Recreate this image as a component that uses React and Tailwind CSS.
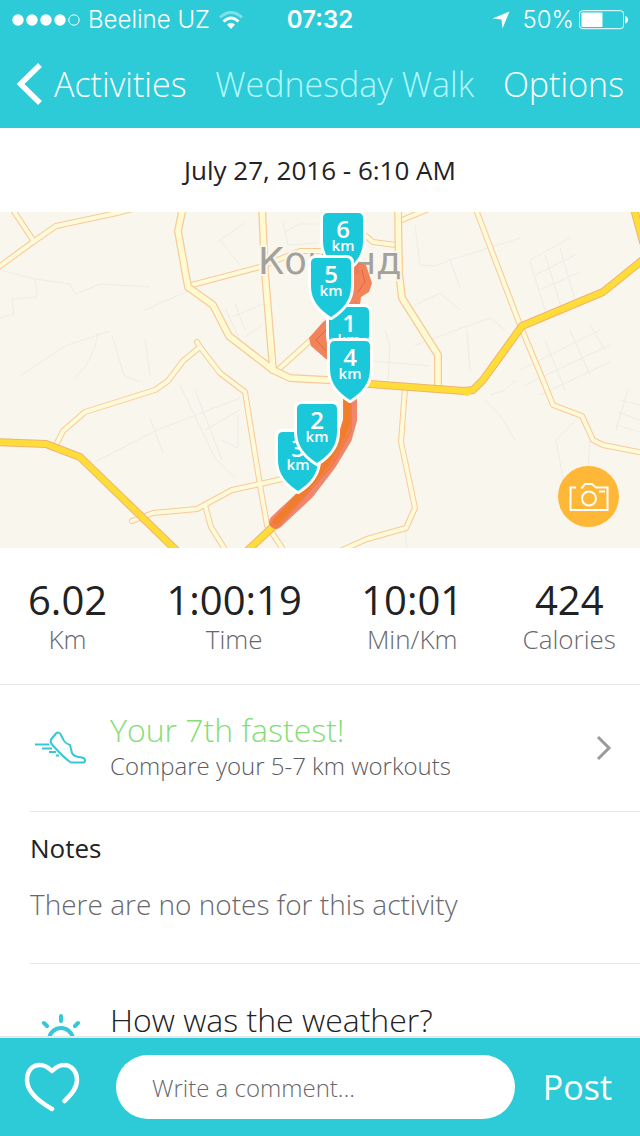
import { useState } from "react";

const stats = [
  { value: "6.02", label: "Km" },
  { value: "1:00:19", label: "Time" },
  { value: "10:01", label: "Min/Km" },
  { value: "424", label: "Calories" },
];

// faint lanes between the roads
const lanes = [
  "M0 270L35 279L37 297L12 299L14 314L0 318M35 279L70 284L75 294L100 284L150 287",
  "M145 310L188 291M20 376L65 346L110 331M98 333Q95 358 75 378M112 335L124 375L140 382M145 339L150 375",
  "M217 242L245 223M220 240L240 265M232 317L265 303M235 304L245 330M225 308L240 340M244 338L262 325",
  "M95 462L155 431L240 398M150 418L163 453M180 385L215 458L235 478M195 390L222 460M205 430L240 410M222 440L238 448L238 415",
  "M285 232L300 224L318 224M283 222L288 245L318 243M415 225L420 265L435 266L450 260L520 238M450 260L460 288M415 305L440 293L460 310",
  "M530 260L570 238M535 275L575 255M540 290L580 272M530 262L548 320M545 255L562 310M560 248L575 300",
  "M520 370L600 330M525 385L610 345M540 395L610 362M545 340L565 390M570 330L590 375M590 325L605 350",
  "M485 400L500 415L515 440M490 395L505 390L515 380M578 418L556 440L565 490M590 440L588 470M620 400L640 405M618 412L640 420M616 425L640 432M628 390L616 430",
  "M385 330L390 345L388 380M415 345L490 318L505 330M467 330L470 370M360 360L430 366M405 530L407 548",
];

const roads = [
  "M-4 269L33 242L56 226L117 213L140 207",
  "M11 207L33 240",
  "M188 286L260 267L300 251L344 251",
  "M344 232L366 236L373 242L396 245",
  "M402 220L436 206",
  "M475 207L520 325L543 380L553 405L582 416L593 440L603 445L644 453",
  "M280 368L312 339",
  "M197 342L200 347L183 361L168 381L155 390L85 412L63 431L57 443",
  "M200 347L220 373L245 392L260 485L267 525L284 551",
  "M132 521L153 513L197 509L232 490L260 484L300 475",
  "M205 505L211 527L226 551",
  "M405 388L401 442L415 508L406 528L367 539L340 551",
];

const wideRoads = [
  "M183 207L178 231L188 287L213 305L229 336L273 370L290 378L345 381",
  "M262 207L265 273L273 370",
  "M398 207L399 273L402 298L438 355L438 386",
];

const highways = [
  "M-4 442L46 444L80 457L178 552",
  "M345 382L370 384L464 391L473 390L483 380L522 326L603 292L644 259",
  "M633 205L643 242",
  "M246 552L277 523L330 463L348 430L348 385",
];

// later pins are drawn over the earlier ones
const pins = [
  { km: 6, x: 323, y: 213 },
  { km: 1, x: 329, y: 307 },
  { km: 5, x: 311, y: 258 },
  { km: 4, x: 330, y: 341 },
  { km: 3, x: 278, y: 432 },
  { km: 2, x: 297, y: 404 },
];

function Road({ paths, edge, edgeWidth, fill, fillWidth }) {
  return (
    <g fill="none" strokeLinejoin="round" strokeLinecap="round">
      {paths.map((d) => (
        <path key={d} d={d} stroke={edge} strokeWidth={edgeWidth} />
      ))}
      {paths.map((d) => (
        <path key={d + "fill"} d={d} stroke={fill} strokeWidth={fillWidth} />
      ))}
    </g>
  );
}

function RouteMap() {
  return (
    <svg
      viewBox="0 212 640 336"
      preserveAspectRatio="xMidYMid slice"
      className="block h-[336px] w-full bg-[#f9f6ee]"
      role="img"
      aria-label="Route map"
    >
      <g fill="none" stroke="#efece6" strokeWidth="1">
        {lanes.map((d) => (
          <path key={d} d={d} />
        ))}
      </g>
      <Road paths={roads} edge="#f8ca98" edgeWidth="6" fill="#fffada" fillWidth="4" />
      <Road paths={wideRoads} edge="#f8ca98" edgeWidth="8" fill="#fffad2" fillWidth="5.500" />
      <Road paths={highways} edge="#f0b272" edgeWidth="8" fill="#fedd38" fillWidth="6" />
      <circle cx="467" cy="392" r="4" fill="#fedd38" />

      <text
        x="258"
        y="274"
        fill="#a3a19b"
        stroke="#f9f6ee"
        strokeWidth="4"
        paintOrder="stroke"
        className="font-['DejaVu_Sans',sans-serif] text-[37px]"
      >
        Коканд
      </text>

      {/* recorded route */}
      <g fill="#f07a4e" fillOpacity="0.92">
        <path d="M356 262L366 265L369 274L372 283L369 292L361 297L360 304L344 304L344 262Z" />
        <path d="M334 314L323 322L309 338L311 346L326 359L340 362Z" />
      </g>
      <path d="M362 270L365 282L358 292M326 330L316 340L326 351" fill="none" stroke="#e86539" strokeWidth="1" />
      <path
        d="M276 522L292 507L307 493L330 463L345 438L350 420L350 392"
        fill="none"
        stroke="#ee6a4a"
        strokeOpacity="0.8"
        strokeWidth="14"
        strokeLinecap="round"
        strokeLinejoin="round"
      />
      <path
        d="M276 521L303 492L326 463L342 435L347 420L347 392"
        fill="none"
        stroke="#f07c22"
        strokeOpacity="0.75"
        strokeWidth="7"
        strokeLinecap="round"
        strokeLinejoin="round"
      />

      {pins.map((pin) => (
        <g key={pin.km} transform={`translate(${pin.x} ${pin.y})`}>
          <path
            d="M5 0H35Q40 0 40 5V28C40 43 31 52 20 59C9 52 0 43 0 28V5Q0 0 5 0Z"
            fill="#1bc8da"
            stroke="#fff"
            strokeWidth="6"
            paintOrder="stroke"
            strokeLinejoin="round"
          />
          <g
            fill="#fff"
            textAnchor="middle"
            className="font-['Open_Sans',sans-serif] font-semibold"
          >
            <text x="20" y="25" className="text-[24px]">{pin.km}</text>
            <text x="20" y="38" className="text-[15px]">km</text>
          </g>
        </g>
      ))}
    </svg>
  );
}

function StatusBar() {
  return (
    <div className="grid h-10 grid-cols-[1fr_auto_1fr] items-center px-3 font-['Inter',sans-serif] text-[24px]">
      <div className="flex items-center gap-2">
        <svg width="68" height="12" viewBox="0 0 68 12" fill="#fff">
          <circle cx="6" cy="6" r="5.700" />
          <circle cx="20" cy="6" r="5.700" />
          <circle cx="34" cy="6" r="5.700" />
          <circle cx="48" cy="6" r="5.700" />
          <circle cx="62" cy="6" r="5.200" fill="none" stroke="#fff" />
        </svg>
        <span className="font-light">Beeline UZ</span>
        <svg width="26" height="20" viewBox="0 0 26 20" fill="none" stroke="#fff" strokeWidth="3">
          <path d="M2 7.500Q13 -2.500 24 7.500" opacity="0.4" />
          <path d="M5.500 11.500Q13 4.500 20.500 11.500" />
          <path d="M9 14.500Q13 11 17 14.500L13 19Z" fill="#fff" stroke="none" />
        </svg>
      </div>
      <span className="font-semibold">07:32</span>
      <div className="flex items-center justify-end">
        <svg width="18" height="18" viewBox="0 0 18 18" fill="#fff" className="mr-3">
          <path d="M17.500 0.500L10.500 17.500L9.500 8.500L0.500 7.500Z" />
        </svg>
        <span className="mr-1 font-light">50%</span>
        <svg width="50" height="20" viewBox="0 0 50 20">
          <rect x="1.500" y="0.700" width="44" height="18" rx="3" fill="none" stroke="#fff" />
          <rect x="3.500" y="2.500" width="21" height="14.500" rx="1" fill="#fff" />
          <path d="M47 6Q50 6.500 50 9.700T47 13.500Z" fill="#fff" />
        </svg>
      </div>
    </div>
  );
}

export default function App() {
  const [comment, setComment] = useState("");

  return (
    <div className="flex h-screen flex-col bg-white font-['Open_Sans',sans-serif] text-[#222224]">
      <header className="shrink-0 bg-[#2dcad7] text-white">
        <StatusBar />
        <nav className="flex h-[88px] items-center justify-between px-4 text-[34px] font-light">
          <button type="button" className="flex items-center gap-3">
            <svg width="26" height="42" viewBox="0 0 26 42" fill="none" stroke="#fff" strokeWidth="5.500">
              <path d="M24 2L4.500 21L24 40" />
            </svg>
            Activities
          </button>
          <h1 className="text-[#b2f8fc]">Wednesday Walk</h1>
          <button type="button">Options</button>
        </nav>
      </header>

      <main className="min-h-0 flex-1 overflow-y-auto [scrollbar-width:none]">
        <p className="flex h-[84px] items-center justify-center text-[26px] font-medium">
          July 27, 2016 - 6:10 AM
        </p>

        <div className="relative">
          <RouteMap />
          <button
            type="button"
            aria-label="Add photo"
            className="absolute right-[21px] bottom-[21px] flex size-[61px] items-center justify-center rounded-full bg-[#ffb738]"
          >
            <svg width="40" height="30" viewBox="0 0 40 30" fill="none" stroke="#fff" strokeWidth="2">
              <path d="M7 5.500H1.500V28H38.500V5.500H27L23 2H16L12.500 6.500" />
              <circle cx="20" cy="16.500" r="7" />
              <path d="M30 9.500H36" />
            </svg>
          </button>
        </div>

        <dl className="flex h-[137px] items-center justify-between border-b border-gray-200 pr-6 pl-7">
          {stats.map((stat) => (
            <div key={stat.label} className="flex flex-col-reverse items-center">
              <dt className="text-[26px] leading-8 font-light text-[#68686c]">{stat.label}</dt>
              <dd className="text-[40px] leading-[46px] font-medium">{stat.value}</dd>
            </div>
          ))}
        </dl>

        <div className="pl-[30px]">
          <a href="#compare" className="flex h-[127px] items-center border-b border-gray-200 pr-7">
            <svg width="60" height="34" viewBox="0 0 60 34" fill="none" stroke="#36c7d8" strokeWidth="2" strokeLinejoin="round">
              <path d="M26 2.500Q28.500 0.500 30.500 3L33 8Q34.500 12 40 14L42 22Q44 26 52 26.500Q57 28 54 31.500H41Q35 28 22 13.500Q20 11.500 21 8.500Z" />
              <path d="M5 13.500H19M12 17.500H22M19 21H26M26 24.500H29" />
            </svg>
            <div className="ml-5 flex-1">
              <p className="text-[32px] leading-9 font-light text-[#85dd75]">Your 7th fastest!</p>
              <p className="text-[24px] leading-9 font-light text-[#5c5c60]">Compare your 5-7 km workouts</p>
            </div>
            <svg width="16" height="26" viewBox="0 0 16 26" fill="none" stroke="#9b9b9f" strokeWidth="3">
              <path d="M2 2L13 13L2 24" />
            </svg>
          </a>

          <section className="h-[152px] border-b border-gray-200 pt-5">
            <h2 className="text-[26px] leading-8 font-medium">Notes</h2>
            <p className="mt-6 text-[28px] leading-8 font-light text-[#68686c]">
              There are no notes for this activity
            </p>
          </section>

          <section className="flex items-start pt-9">
            <svg width="60" height="60" viewBox="0 0 60 60" fill="none" stroke="#36c7d8" strokeWidth="4" strokeLinecap="round">
              <circle cx="31" cy="40" r="12" />
              <path d="M31 16V21M14 23L17 26M48 23L45 26M7 40H12M50 40H55M14 57L17 54M48 57L45 54" />
            </svg>
            <h2 className="ml-5 text-[32px] leading-10 font-light">How was the weather?</h2>
          </section>
        </div>
      </main>

      <footer className="shrink-0 border-t-2 border-gray-200 bg-[#2dcad7]">
        <form
          onSubmit={(e) => {
            e.preventDefault();
            setComment("");
          }}
          className="flex h-[98px] items-center pr-7 pl-6"
        >
          <button type="button" aria-label="Like">
            <svg width="56" height="50" viewBox="0 0 56 50" fill="none" stroke="#fff" strokeWidth="4.500" strokeLinecap="round" strokeLinejoin="round">
              <path d="M28 47C14 39 3 29 3 18C3 8 9 3 16 3C21 3 25 6 28 9C31 6 35 3 40 3C47 3 53 9 53 18C53 26 48 32 40.500 39" />
            </svg>
          </button>
          <input
            type="text"
            aria-label="Comment"
            value={comment}
            onChange={(e) => setComment(e.target.value)}
            placeholder="Write a comment..."
            className="ml-9 h-16 min-w-0 flex-1 rounded-full bg-white px-9 text-[24px] font-light text-[#222224] outline-none placeholder:text-[#68686c]"
          />
          <button type="submit" className="ml-7 text-[34px] text-white">Post</button>
        </form>
      </footer>
    </div>
  );
}
